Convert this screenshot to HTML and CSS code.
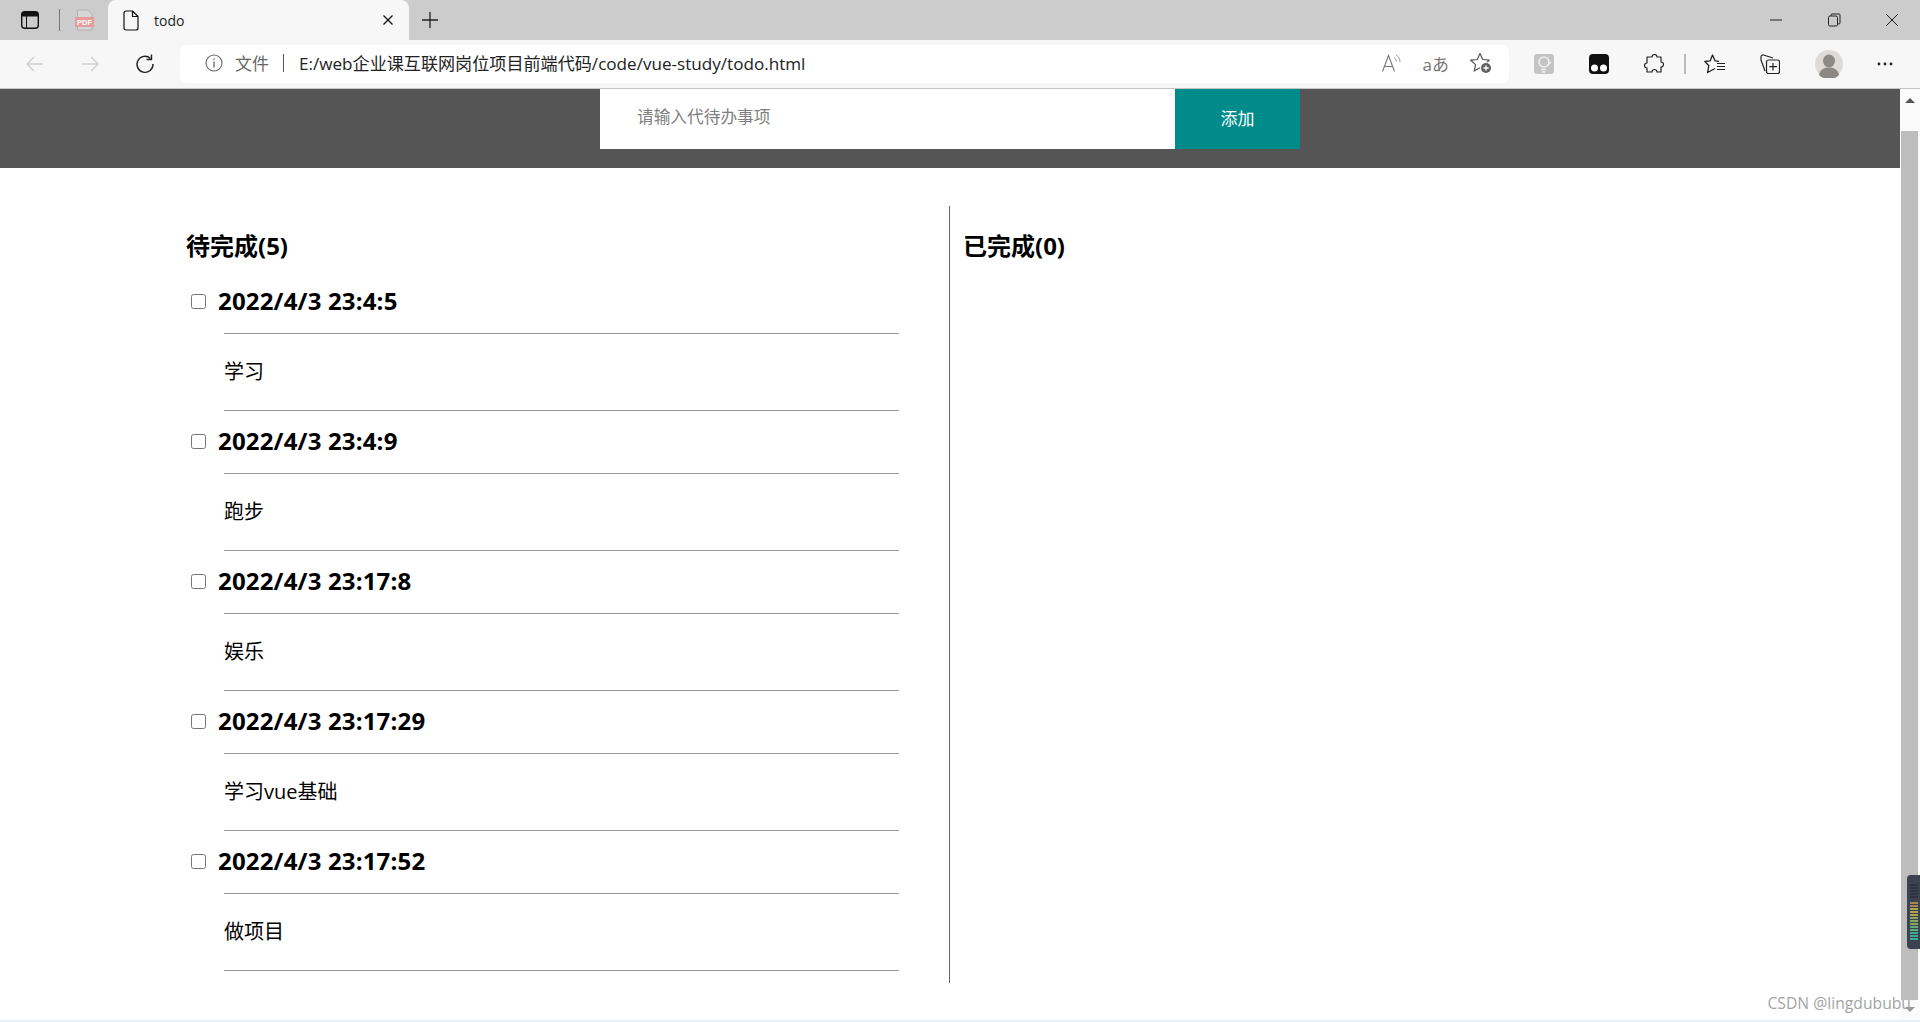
FILE: index.html
```html
<!DOCTYPE html>
<html lang="zh-CN">
<head>
    <meta charset="UTF-8">
    <title>todo</title>
    <link rel="stylesheet" href="styles.css">
</head>
<body>

    <!-- Tab strip -->
    <div class="tabstrip">
        <div class="strip-left">
            <svg class="ico" width="20" height="20" viewBox="0 0 20 20"><rect x="1.700" y="1.700" width="16.600" height="16.600" rx="3" fill="none" stroke="#111" stroke-width="1.400"/><path d="M2 2h16v4.500H2z" fill="#111"/><path d="M6.500 6v12" stroke="#111" stroke-width="1"/></svg>
            <span class="strip-sep"></span>
            <svg class="ico pdf" width="20" height="22" viewBox="0 0 20 22"><path d="M2.500 1h10l4.500 4.500V21H2.500z" fill="#d6d6d6" stroke="#b0b0b0"/><rect x="0" y="8" width="19" height="10" fill="#e89b9b"/><text x="9.500" y="16" class="pdf-label">PDF</text></svg>
        </div>
        <div class="tab">
            <svg width="16" height="21" viewBox="0 0 16 21"><path d="M3 1h6.500L15 6.500V18a2 2 0 0 1-2 2H3a2 2 0 0 1-2-2V3a2 2 0 0 1 2-2zM9.500 1v5.500H15" fill="none" stroke="#111" stroke-width="1.200" stroke-linejoin="round"/></svg>
            <span class="tab-title">todo</span>
            <svg width="12" height="12" viewBox="0 0 12 12"><path d="M1.500 1.500l9 9M10.500 1.500l-9 9" stroke="#111" stroke-width="1.300"/></svg>
        </div>
        <svg class="new-tab" width="16" height="16" viewBox="0 0 16 16"><path d="M8 0v16M0 8h16" stroke="#222" stroke-width="1.300"/></svg>
        <div class="win-controls">
            <svg width="14" height="14" viewBox="0 0 14 14"><path d="M1 7h12" stroke="#222" stroke-width="1"/></svg>
            <svg width="14" height="14" viewBox="0 0 14 14"><rect x="1.500" y="3" width="9" height="10" rx="1.500" fill="none" stroke="#222"/><path d="M4 3V2a1 1 0 0 1 1-1h7a1 1 0 0 1 1 1v8a1 1 0 0 1-1 1h-1.500" fill="none" stroke="#222"/></svg>
            <svg width="14" height="14" viewBox="0 0 14 14"><path d="M1 1l12 12M13 1L1 13" stroke="#222" stroke-width="1"/></svg>
        </div>
    </div>

    <!-- Toolbar -->
    <div class="toolbar">
        <div class="nav-buttons">
            <svg width="20" height="20" viewBox="0 0 20 20"><path d="M18 10H2M9 3l-7 7 7 7" fill="none" stroke="#cfcfcf" stroke-width="1.400"/></svg>
            <svg width="20" height="20" viewBox="0 0 20 20"><path d="M2 10h16M11 3l7 7-7 7" fill="none" stroke="#cfcfcf" stroke-width="1.400"/></svg>
            <svg width="20" height="20" viewBox="0 0 20 20"><path d="M15.500 4.500A8 8 0 1 0 18 10" fill="none" stroke="#222" stroke-width="1.400"/><path d="M16.500 0.500v5h-5" fill="none" stroke="#222" stroke-width="1.400"/></svg>
        </div>
        <div class="address">
            <svg width="20" height="20" viewBox="0 0 20 20"><circle cx="10" cy="10" r="8" fill="none" stroke="#666" stroke-width="1.100"/><path d="M10 8.500V14.500M10 5.500v1.500" stroke="#666" stroke-width="1.300"/></svg>
            <span class="addr-file">文件</span>
            <span class="addr-sep"></span>
            <span class="addr-url">E:/web企业课互联网岗位项目前端代码/code/vue-study/todo.html</span>
            <div class="addr-icons">
                <svg width="20" height="18" viewBox="0 0 20 18"><path d="M0.500 17.500L6.500 1.500l6 16M2.500 12.500h8" fill="none" stroke="#777" stroke-width="1.100"/><path d="M12 3.500a5 5 0 0 1 2.500 4M14 1a8 8 0 0 1 4 7" fill="none" stroke="#999"/></svg>
                <span class="translate-glyph">aあ</span>
                <svg width="22" height="22" viewBox="0 0 22 22"><path d="M10 1.500l2.700 6 6.600.7-4.900 4.400 1.400 6.500-5.800-3.300-5.800 3.300 1.400-6.500L0.700 8.200l6.600-.7z" fill="none" stroke="#555" stroke-width="1.200" stroke-linejoin="round"/><circle cx="16" cy="16" r="6" fill="#fff"/><circle cx="16" cy="16" r="5" fill="#5f5f5f"/><path d="M16 13.300v5.400M13.300 16h5.400" stroke="#fff" stroke-width="1.300"/></svg>
            </div>
        </div>
        <div class="tool-icons">
            <svg width="20" height="20" viewBox="0 0 20 20"><rect width="20" height="20" rx="3" fill="#c4c4c4"/><circle cx="10" cy="8" r="5" fill="none" stroke="#f0f0f0" stroke-width="1.600"/><path d="M7 15.500h5M8 18h3M13 12l4-4" stroke="#f0f0f0" stroke-width="1.300"/></svg>
            <svg width="20" height="20" viewBox="0 0 20 20"><rect width="20" height="20" rx="4" fill="#111"/><circle cx="5.500" cy="14" r="3.500" fill="#fff"/><circle cx="14.500" cy="14" r="3.500" fill="#fff"/></svg>
            <svg width="20" height="20" viewBox="0 0 20 20"><path d="M8 3a2.500 2.500 0 0 1 5 0h4v5a2.500 2.500 0 0 1 0 5v5h-4a2.500 2.500 0 0 0-5 0H3v-4a2.500 2.500 0 0 1 0-5V3z" fill="none" stroke="#222" stroke-width="1.200" stroke-linejoin="round"/></svg>
            <span class="tool-sep"></span>
            <svg class="tool-fav" width="22" height="20" viewBox="0 0 22 20"><path d="M15 7.300L11 6.800 8.500 1 6.200 6.800 0.800 7.500 4.800 11.500 3.600 18.500 11 14.500" fill="none" stroke="#222" stroke-width="1.300" stroke-linejoin="round"/><path d="M13 9.500h8M13 12.500h8M13 15.500h8" stroke="#222" stroke-width="1.200"/></svg>
            <svg class="tool-coll" width="20" height="20" viewBox="0 0 20 20"><path d="M5 17L1 6V3a2 2 0 0 1 2.500-2L13 4" fill="none" stroke="#222" stroke-width="1.200" stroke-linejoin="round"/><rect x="6.500" y="6" width="13" height="13.500" rx="2" fill="#f7f7f7" stroke="#222" stroke-width="1.200"/><path d="M13 9v7.500M9.300 12.700h7.500" stroke="#222" stroke-width="1.200"/></svg>
            <svg class="tool-avatar" width="28" height="28" viewBox="0 0 28 28"><circle cx="14" cy="14" r="14" fill="#dcdbd8"/><ellipse cx="14" cy="11" rx="6" ry="6.500" fill="#8c8884"/><path d="M4 25c1-6 6-7.500 10-7.500s9 1.500 10 7.500a14 14 0 0 1-20 0z" fill="#8c8884"/></svg>
            <svg class="tool-more" width="16" height="4" viewBox="0 0 16 4"><circle cx="2" cy="2" r="1.400" fill="#222"/><circle cx="8" cy="2" r="1.400" fill="#222"/><circle cx="14" cy="2" r="1.400" fill="#222"/></svg>
        </div>
    </div>

    <div class="viewport">
        <div class="page">
            <!-- Add form -->
            <header class="add-bar">
                <div class="add-form">
                    <input class="add-input" type="text" placeholder="请输入代待办事项">
                    <button class="add-button">添加</button>
                </div>
            </header>

            <main class="lists">
                <!-- Pending -->
                <section class="col col-todo">
                    <h2 class="col-title">待完成(5)</h2>

                    <div class="item">
                        <div class="item-head"><input type="checkbox" class="item-check"><h3 class="item-date">2022/4/3 23:4:5</h3></div>
                        <p class="item-text">学习</p>
                    </div>
                    <div class="item">
                        <div class="item-head"><input type="checkbox" class="item-check"><h3 class="item-date">2022/4/3 23:4:9</h3></div>
                        <p class="item-text">跑步</p>
                    </div>
                    <div class="item">
                        <div class="item-head"><input type="checkbox" class="item-check"><h3 class="item-date">2022/4/3 23:17:8</h3></div>
                        <p class="item-text">娱乐</p>
                    </div>
                    <div class="item">
                        <div class="item-head"><input type="checkbox" class="item-check"><h3 class="item-date">2022/4/3 23:17:29</h3></div>
                        <p class="item-text">学习vue基础</p>
                    </div>
                    <div class="item">
                        <div class="item-head"><input type="checkbox" class="item-check"><h3 class="item-date">2022/4/3 23:17:52</h3></div>
                        <p class="item-text">做项目</p>
                    </div>
                </section>

                <!-- Done -->
                <section class="col col-done">
                    <h2 class="col-title">已完成(0)</h2>
                </section>
            </main>
        </div>

        <!-- Scrollbar -->
        <div class="scrollbar">
            <span class="scroll-up"></span>
            <div class="scroll-thumb"></div>
            <span class="scroll-down"></span>
            <div class="meter">
                <svg width="10" height="56" viewBox="0 0 10 56"><path d="M1 1h8M1 4h8M1 7h8M1 10h8M1 13h8" stroke="#2b2f3a" stroke-width="1.500"/><path d="M1 19h8M1 22h8" stroke="#d09a4a" stroke-width="1.500"/><path d="M1 25h8M1 28h8M1 31h8" stroke="#cfc24f" stroke-width="1.500"/><path d="M1 34h8M1 37h8M1 40h8" stroke="#a6c85e" stroke-width="1.500"/><path d="M1 43h8M1 46h8" stroke="#6fcf8a" stroke-width="1.500"/><path d="M1 49h8M1 52h8M1 55h8" stroke="#38d0a8" stroke-width="1.500"/></svg>
            </div>
        </div>
        <div class="watermark">CSDN @lingdububu</div>
    </div>

    <div class="bottom-edge"></div>

</body>
</html>
```

FILE: styles.css
```css
* {
    box-sizing: border-box;
}

html, body {
    height: 100%;
}

body {
    margin: 0;
    padding: 0;
    display: flex;
    flex-direction: column;
    overflow: hidden;
    color: #000;
    background-color: #fff;
    font-family: "Open Sans", "Noto Sans CJK SC", sans-serif;
}

/* browser chrome */
.tabstrip {
    flex: 0 0 40px;
    display: flex;
    align-items: flex-end;
    background-color: #ccc;
}

.strip-left {
    flex: none;
    width: 108px;
    height: 40px;
    padding-left: 20px;
    display: flex;
    align-items: center;
}

.strip-sep {
    width: 1px;
    height: 22px;
    margin: 0 15px 0 19px;
    background-color: #777;
}

.pdf-label {
    font-family: "Liberation Sans", sans-serif;
    font-size: 7.500px;
    font-weight: bold;
    fill: #fff;
    text-anchor: middle;
}

.tab {
    width: 301px;
    height: 40px;
    margin-right: 13px;
    padding: 0 15px 0 15px;
    display: flex;
    align-items: center;
    background-color: #f7f7f7;
    border-radius: 8px 8px 0 0;
}

.tab-title {
    margin-left: 15px;
    flex: 1;
    font-size: 14px;
    color: #222;
}

.new-tab {
    align-self: center;
}

.win-controls {
    margin-left: auto;
    height: 40px;
    padding-right: 21px;
    display: flex;
    align-items: center;
    gap: 44px;
}

.toolbar {
    flex: 0 0 49px;
    display: flex;
    align-items: center;
    background-color: #f7f7f7;
    border-bottom: 1px solid #c4c4c4;
}

.nav-buttons {
    flex: none;
    width: 180px;
    padding-left: 25px;
    display: flex;
    align-items: center;
    gap: 35px;
}

.address {
    flex: none;
    width: 1329px;
    height: 38px;
    padding: 0 17px 2px 24px;
    display: flex;
    align-items: center;
    background-color: #fff;
    border-radius: 7px;
}

.addr-file {
    margin: 0 0 2px 11px;
    font-size: 17px;
    color: #666;
}

.addr-sep {
    width: 1px;
    height: 18px;
    margin: 0 15px 0 14px;
    background-color: #555;
}

.addr-url {
    margin-bottom: 2px;
    font-size: 17.100px;
    color: #222;
}

.addr-icons {
    margin-left: auto;
    display: flex;
    align-items: center;
    gap: 21px;
}

.translate-glyph {
    font-size: 17px;
    color: #777;
}

.tool-icons {
    flex: none;
    padding-left: 25px;
    display: flex;
    align-items: center;
}

.tool-icons svg {
    flex: none;
    margin-right: 35px;
}

.tool-icons .tool-fav,
.tool-icons .tool-avatar {
    margin-right: 34px;
}

.tool-icons .tool-more {
    margin-right: 0;
}

.tool-sep {
    flex: none;
    width: 2px;
    height: 20px;
    margin: 0 18px 0 -15px;
    background-color: #bbb;
}

/* page */
.viewport {
    flex: 1;
    position: relative;
    display: flex;
    min-height: 0;
}

.page {
    flex: 1;
}

.add-bar {
    height: 79px;
    padding-left: 600px;
    background-color: #555;
}

.add-form {
    display: flex;
    width: 700px;
    height: 60px;
}

.add-input {
    width: 575px;
    height: 60px;
    padding: 0 0 6px 37px;
    border: none;
    outline: none;
    border-radius: 0;
    font-family: inherit;
    font-size: 16.700px;
    background-color: #fff;
}

.add-input::placeholder {
    color: #808080;
}

.add-button {
    width: 125px;
    height: 60px;
    padding: 0 0 4px;
    border: none;
    font-family: inherit;
    font-size: 17px;
    color: #fff;
    background-color: #008b8b;
}

.lists {
    display: flex;
    padding-top: 38px;
}

.col {
    height: 777px;
}

.col-todo {
    width: 950px;
    padding-left: 186px;
    border-right: 1px solid #666;
}

.col-done {
    flex: 1;
    padding-left: 13px;
}

.col-title {
    margin: 0;
    height: 64px;
    padding-top: 20px;
    font-size: 24px;
    line-height: 40px;
    font-weight: bold;
}

.item {
    width: 713px;
}

.item-head {
    height: 63px;
    display: flex;
    align-items: flex-start;
}

.item-check {
    width: 15px;
    height: 15px;
    margin: 24px 12px 0 5px;
}

.item-date {
    margin: 0;
    padding-top: 13px;
    font-size: 24px;
    line-height: 36px;
    font-weight: bold;
    letter-spacing: 0.170px;
}

.item-text {
    margin: 0 0 0 38px;
    height: 78px;
    border-top: 1px solid #999;
    border-bottom: 1px solid #999;
    font-size: 20px;
    line-height: 76px;
}

.item + .item {
    margin-top: -1px;
}

.scrollbar {
    position: relative;
    width: 20px;
    background-color: #fbfbfb;
}

.scroll-up,
.scroll-down {
    position: absolute;
    left: 5px;
    width: 0;
    height: 0;
    border-left: 5px solid transparent;
    border-right: 5px solid transparent;
}

.scroll-up {
    top: 9px;
    border-bottom: 5px solid #555;
}

.scroll-down {
    top: 918px;
    border-top: 5px solid #999;
}

.scroll-thumb {
    position: absolute;
    top: 42px;
    left: 1px;
    width: 17px;
    height: 869px;
    background-color: #bdbdbd;
}

.meter {
    position: absolute;
    top: 786px;
    right: 0;
    width: 13px;
    height: 74px;
    padding: 9px 0 0 2px;
    background-color: #3c4250;
    border-radius: 4px 0 0 4px;
}

.meter svg {
    display: block;
}

.watermark {
    position: absolute;
    right: 9px;
    bottom: 6px;
    font-family: "Open Sans", sans-serif;
    font-size: 15.700px;
    color: #a3a3a3;
}

.bottom-edge {
    flex: 0 0 2px;
    background-color: #e8f0f8;
}
```
